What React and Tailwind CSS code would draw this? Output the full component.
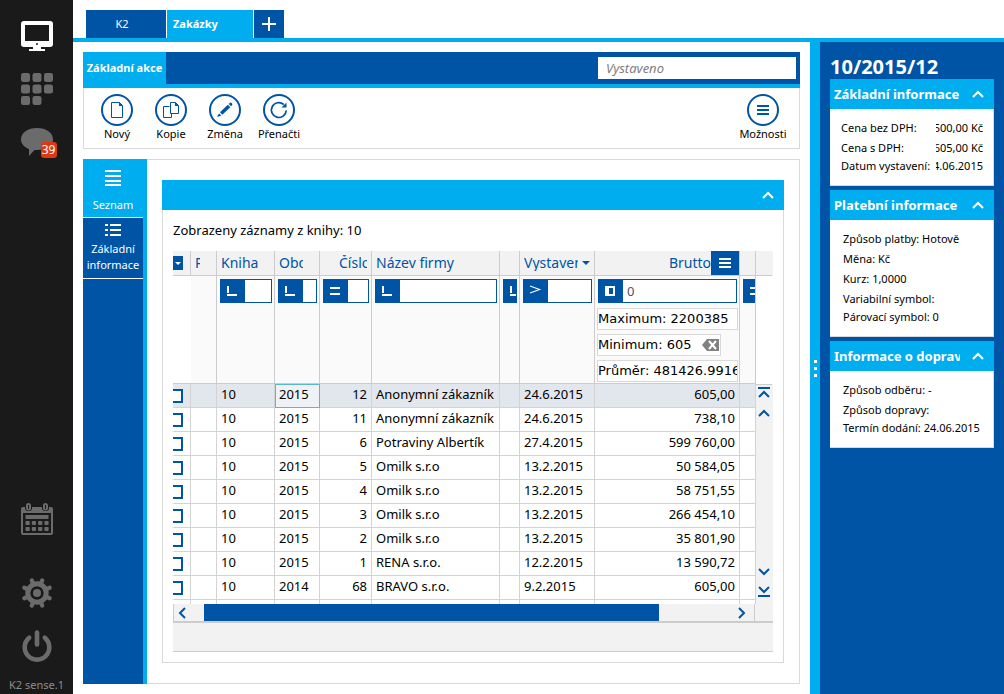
import React, { useState } from 'react';

const records = [
    { id: 1, book: '10', period: '2015', number: '12', company: 'Anonymní zákazník', issued: '24.6.2015', gross: '605,00' },
    { id: 2, book: '10', period: '2015', number: '11', company: 'Anonymní zákazník', issued: '24.6.2015', gross: '738,10' },
    { id: 3, book: '10', period: '2015', number: '6', company: 'Potraviny Albertík', issued: '27.4.2015', gross: '599 760,00' },
    { id: 4, book: '10', period: '2015', number: '5', company: 'Omilk s.r.o', issued: '13.2.2015', gross: '50 584,05' },
    { id: 5, book: '10', period: '2015', number: '4', company: 'Omilk s.r.o', issued: '13.2.2015', gross: '58 751,55' },
    { id: 6, book: '10', period: '2015', number: '3', company: 'Omilk s.r.o', issued: '13.2.2015', gross: '266 454,10' },
    { id: 7, book: '10', period: '2015', number: '2', company: 'Omilk s.r.o', issued: '13.2.2015', gross: '35 801,90' },
    { id: 8, book: '10', period: '2015', number: '1', company: 'RENA s.r.o.', issued: '12.2.2015', gross: '13 590,72' },
    { id: 9, book: '10', period: '2014', number: '68', company: 'BRAVO s.r.o.', issued: '9.2.2015', gross: '605,00' },
];

/* Icons */
const MonitorIcon = () => (
    <svg width="32" height="30" viewBox="0 0 32 30">
        <path fillRule="evenodd" fill="#fff" d="M3 0h26a3 3 0 0 1 3 3v20a3 3 0 0 1-3 3H3a3 3 0 0 1-3-3V3a3 3 0 0 1 3-3zM4 4v16h24V4z" />
        <path fill="#fff" d="M12 26h8v2h4v2H8v-2h4z" />
        <circle cx="16" cy="23" r="1" fill="#1a1a1a" />
    </svg>
);

const AppsIcon = () => (
    <svg width="32" height="32" viewBox="0 0 32 32" fill="#6b6b6b">
        {[[0, 0], [11.5, 0], [23, 0], [0, 11.5], [11.5, 11.5], [23, 11.5], [0, 23], [11.5, 23]].map(([x, y]) => (
            <rect key={`${x}-${y}`} x={x} y={y} width="9" height="9" rx="2.2" />
        ))}
    </svg>
);

const ChatIcon = () => (
    <svg width="32" height="28" viewBox="0 0 32 28" fill="#6b6b6b">
        <path d="M16 0c9 0 16 4.500 16 11.500S25 22 16 22h-2.500L8 28v-7C3 19 0 15.500 0 11.500 0 4.500 7 0 16 0z" />
    </svg>
);

const CalendarIcon = () => (
    <svg width="32" height="32" viewBox="0 0 32 32" fill="#6b6b6b">
        <path fillRule="evenodd" d="M2 4h28a2 2 0 0 1 2 2v24a2 2 0 0 1-2 2H2a2 2 0 0 1-2-2V6a2 2 0 0 1 2-2zM2 10v20h28V10z" />
        <rect x="4" y="0" width="7" height="8" rx="3" fill="#1a1a1a" />
        <rect x="21" y="0" width="7" height="8" rx="3" fill="#1a1a1a" />
        <path fillRule="evenodd" d="M7.500 0A2.500 2.500 0 0 1 10 2.500V5a2.500 2.500 0 0 1-5 0V2.500A2.500 2.500 0 0 1 7.500 0zM7 2v4h1V2zM24.500 0A2.500 2.500 0 0 1 27 2.500V5a2.500 2.500 0 0 1-5 0V2.500A2.500 2.500 0 0 1 24.500 0zM24 2v4h1V2z" />
        <rect x="4.500" y="12" width="23" height="4" />
        {[18, 24].map((y) => [4.5, 10.8, 17.1, 23.4].map((x) => (
            <rect key={`${x}-${y}`} x={x} y={y} width="4.200" height="4" rx="0.800" />
        )))}
    </svg>
);

const GearIcon = () => (
    <svg width="32" height="32" viewBox="0 0 32 32">
        <g stroke="#6b6b6b" strokeWidth="4.200" strokeLinecap="round">
            {[22.5, 67.5, 112.5, 157.5, 202.5, 247.5, 292.5, 337.5].map((angle) => (
                <path key={angle} d="M16 7V2.300" transform={`rotate(${angle} 16 16)`} />
            ))}
        </g>
        <circle cx="16" cy="16" r="9.200" fill="none" stroke="#6b6b6b" strokeWidth="5" />
        <circle cx="16" cy="16" r="4" fill="#6b6b6b" />
    </svg>
);

const PowerIcon = () => (
    <svg width="32" height="32" viewBox="0 0 32 32" fill="none" stroke="#6b6b6b" strokeWidth="4.600" strokeLinecap="round">
        <path d="M16 2.500v12" />
        <path d="M8.200 7.800a12.300 12.300 0 1 0 15.600 0" />
    </svg>
);

const PageIcon = () => (
    <svg width="32" height="32" viewBox="0 0 32 32" fill="none" stroke="#0054a6">
        <path d="M10.500 8.500h8l3 3v12h-11z" />
        <path fill="#0054a6" stroke="none" d="M18 8l4 4h-4z" />
    </svg>
);

const CopyIcon = () => (
    <svg width="32" height="32" viewBox="0 0 32 32" fill="none" stroke="#0054a6">
        <path d="M14.500 12.500h-6v11h8v-4" />
        <path d="M15.500 8.500h5l3 3v8h-8z" />
        <path fill="#0054a6" stroke="none" d="M20 8l4 4h-4z" />
    </svg>
);

const PencilIcon = () => (
    <svg width="32" height="32" viewBox="0 0 32 32" fill="#0054a6">
        <path d="M11 18.200 18.800 10.700 21.300 13.200 13.300 20.800z" />
        <path d="M19.700 9.900l1.300-1.200c1-.7 2.900 1 2.200 2.200l-1.100 1.400z" />
        <path d="M10.200 19.400l2.200 2.200-3.400 1.100c-.6 0-.7-.3-.6-.8z" />
    </svg>
);

const RefreshIcon = () => (
    <svg width="32" height="32" viewBox="0 0 32 32" fill="none" stroke="#0054a6" strokeWidth="1.700">
        <path d="M23.200 16.500a7.400 7.400 0 1 1-2.500-6" />
        <path fill="#0054a6" stroke="none" d="M23.500 8.500v5h-5z" />
    </svg>
);

const OptionsIcon = () => (
    <svg width="32" height="32" viewBox="0 0 32 32" fill="#0054a6">
        <path d="M10 11h12v2H10zM10 15h12v2H10zM10 19h12v2H10z" />
    </svg>
);

const ChevronIcon = ({ className = '' }) => (
    <svg className={className} width="12" height="8" viewBox="0 0 12 8" fill="none" stroke="currentColor" strokeWidth="2">
        <path d="M1 7l5-5 5 5" />
    </svg>
);

const operators = {
    starts: <path d="M7 6v7M6 15h10" />,
    equals: <path d="M6 8h10M6 14h10" />,
    greater: <path strokeWidth="1.200" d="M6 6l9.500 3.500L6 13" />,
    range: <path fill="#fff" stroke="none" fillRule="evenodd" d="M6 6h10v10H6zM10 8v6h4V8z" />,
};

const actions = [
    { name: 'Nový', icon: PageIcon },
    { name: 'Kopie', icon: CopyIcon },
    { name: 'Změna', icon: PencilIcon },
    { name: 'Přenačti', icon: RefreshIcon },
];

const ActionButton = ({ name, icon: Icon }) => (
    <button className="w-[54px] flex flex-col items-center">
        <span className="w-8 h-8 flex items-center justify-center rounded-full border-2 border-[#0054a6]">
            <span className="shrink-0"><Icon /></span>
        </span>
        <span className="text-[11px] leading-4 whitespace-nowrap">{name}</span>
    </button>
);

const FilterBox = ({ label, operator, defaultValue, className = '' }) => (
    <div className={`flex h-6 ml-[3px] mr-0.5 mt-[3px] bg-white border border-[#0054a6] overflow-hidden ${className}`}>
        <button aria-label={`${label} – operátor`} className="w-6 h-full shrink-0 bg-[#0054a6]">
            <svg width="24" height="22" viewBox="0 0 24 22" fill="none" stroke="#fff" strokeWidth="2">
                {operators[operator]}
            </svg>
        </button>
        <input
            aria-label={label}
            defaultValue={defaultValue}
            className="w-0 min-w-0 flex-1 px-1 text-[13px] text-gray-600 outline-none"
        />
    </div>
);

const Summary = ({ children, className = '' }) => (
    <div className={`h-[22px] flex items-center bg-white border border-[#d9d9d9] font-['DejaVu_Sans','Noto_Sans',sans-serif] text-[13px] whitespace-nowrap overflow-hidden ${className}`}>
        {children}
    </div>
);

const InfoCard = ({ title, children }) => (
    <section className="mb-1">
        <h2>
            <button className="w-full h-[30px] pl-1 pr-[10px] flex items-center justify-between bg-[#00adef] text-white">
                <span className="w-[126px] pt-0.5 text-left text-[13px] font-bold whitespace-nowrap overflow-hidden">{title}</span>
                <ChevronIcon />
            </button>
        </h2>
        <div className="pt-[9px] pb-[11px] bg-white border-r border-b border-[#d9d9d9] text-[11px]">{children}</div>
    </section>
);

const InfoLine = ({ children, last }) => (
    <p className={`pl-[13px] whitespace-nowrap ${last ? 'leading-4' : 'leading-5'}`}>{children}</p>
);

const PriceLine = ({ label, value, last }) => (
    <p className={`pl-[11px] pr-[10px] flex justify-between whitespace-nowrap ${last ? 'leading-4' : 'leading-5'}`}>
        <span>{label}</span>
        <span className="w-[47px] flex justify-end overflow-hidden">{value}</span>
    </p>
);

const Sidebar = () => (
    <aside className="w-[73px] shrink-0 flex flex-col items-center bg-[#1a1a1a]">
        <button aria-label="Plocha" className="mt-[21px]"><MonitorIcon /></button>
        <button aria-label="Aplikace" className="mt-[22px]"><AppsIcon /></button>
        <button aria-label="Zprávy" className="relative mt-[23px]">
            <ChatIcon />
            <span className="absolute left-5 top-3.5 w-4 h-4 rounded-[3px] bg-[#dc3912] text-white text-[12px] leading-4">39</span>
        </button>
        <button aria-label="Kalendář" className="mt-auto"><CalendarIcon /></button>
        <button aria-label="Nastavení" className="mt-[42px]"><GearIcon /></button>
        <button aria-label="Odhlásit" className="mt-[21px]"><PowerIcon /></button>
        <span className="mt-[15px] mb-px text-[11px] leading-4 text-[#8c8c8c]">K2 sense.1</span>
    </aside>
);

const HeaderCell = ({ children, className = '' }) => (
    <th className={`h-[25px] pl-1 bg-[#f2f2f2] border-r border-b border-[#ccc] text-left font-normal text-[14px] leading-4 text-[#0054a6] whitespace-nowrap overflow-hidden ${className}`}>
        {children}
    </th>
);

const FilterCell = ({ children }) => (
    <td className="h-[108px] align-top bg-[#fafafa] border-r border-b border-[#ccc] overflow-hidden">{children}</td>
);

const cell = 'h-6 px-1 pb-1 border-r border-b border-[#d3d3d3] whitespace-nowrap overflow-hidden';

const RecordsTable = () => {
    const [selectedId, setSelectedId] = useState(1);

    return (
        <table className="w-full table-fixed border-separate border-spacing-0 text-[13px] leading-4">
            <colgroup>
                <col className="w-[18px]" />
                <col className="w-[26px]" />
                <col className="w-[58px]" />
                <col className="w-[45px]" />
                <col className="w-[52px]" />
                <col className="w-[128px]" />
                <col className="w-5" />
                <col className="w-[75px]" />
                <col className="w-[145px]" />
                <col />
            </colgroup>
            <thead>
                <tr>
                    <th className="h-[25px] bg-[#f2f2f2] border-r border-b border-[#ccc]">
                        <button aria-label="Výběr" className="w-2.5 h-3.5 flex items-center justify-center bg-[#0054a6]">
                            <svg width="6" height="3" viewBox="0 0 6 3" fill="#fff"><path d="M0 0h6L3 3z" /></svg>
                        </button>
                    </th>
                    <HeaderCell><span className="block w-[5px] overflow-hidden">P</span></HeaderCell>
                    <HeaderCell>Kniha</HeaderCell>
                    <HeaderCell><span className="block w-6 overflow-hidden">Období</span></HeaderCell>
                    <HeaderCell><span className="block w-7 ml-auto mr-1 overflow-hidden">Číslo</span></HeaderCell>
                    <HeaderCell>Název firmy</HeaderCell>
                    <HeaderCell />
                    <HeaderCell>
                        <div className="flex items-center gap-1">
                            <span className="w-[54px] overflow-hidden">Vystaveno</span>
                            <svg width="8" height="4" viewBox="0 0 8 4" fill="#0054a6"><path d="M0 0h8L4 4z" /></svg>
                        </div>
                    </HeaderCell>
                    <HeaderCell>
                        <div className="flex items-center justify-end">
                            Brutto
                            <button aria-label="Nabídka sloupce" className="w-7 h-6 flex items-center justify-center bg-[#0054a6]">
                                <svg width="12" height="10" viewBox="0 0 12 10" fill="#fff"><path d="M0 0h12v2H0zM0 4h12v2H0zM0 8h12v2H0z" /></svg>
                            </button>
                        </div>
                    </HeaderCell>
                    <HeaderCell />
                </tr>
                <tr>
                    <td className="border-b border-[#ccc]" />
                    <td className="bg-[#fafafa] border-r border-b border-[#ccc]" />
                    <FilterCell><FilterBox label="Kniha" operator="starts" /></FilterCell>
                    <FilterCell><FilterBox label="Období" operator="starts" /></FilterCell>
                    <FilterCell><FilterBox label="Číslo" operator="equals" /></FilterCell>
                    <FilterCell><FilterBox label="Název firmy" operator="starts" /></FilterCell>
                    <FilterCell><FilterBox label="Zkratka" operator="starts" /></FilterCell>
                    <FilterCell><FilterBox label="Vystaveno" operator="greater" /></FilterCell>
                    <FilterCell>
                        <FilterBox label="Brutto" operator="range" defaultValue="0" />
                        <div className="mt-[5px] ml-0.5 mr-px flex flex-col items-start gap-1">
                            <Summary className="w-full">Maximum: 2200385</Summary>
                            <Summary className="pr-px">
                                Minimum: 605
                                <button aria-label="Zrušit minimum" className="ml-[10px]">
                                    <svg width="17" height="12" viewBox="0 0 17 12">
                                        <path fill="#808080" d="M5 0h12v12H5L0 6z" />
                                        <path stroke="#fff" strokeWidth="2" d="M7 2l7 8M14 2l-7 8" />
                                    </svg>
                                </button>
                            </Summary>
                            <Summary className="w-full">Průměr: 481426.9916</Summary>
                        </div>
                    </FilterCell>
                    <FilterCell><FilterBox label="Netto" operator="equals" className="w-12" /></FilterCell>
                </tr>
            </thead>
            <tbody>
                {records.map((record) => {
                    const selected = record.id === selectedId;
                    return (
                        <tr key={record.id} onClick={() => setSelectedId(record.id)} className={selected ? 'bg-[#e2e6ed]' : 'bg-white'}>
                            <td className="h-6 border-r border-b border-[#d3d3d3] overflow-hidden">
                                <input
                                    type="checkbox"
                                    aria-label={`Označit záznam ${record.number}`}
                                    className="block w-3.5 h-3.5 -ml-1 appearance-none bg-white border-2 border-[#0054a6]"
                                />
                            </td>
                            <td className={cell} />
                            <td className={cell}>{record.book}</td>
                            <td className={`${cell} ${selected ? 'bg-[#eef1f5] outline outline-[#5bb8c8] -outline-offset-1' : ''}`}>{record.period}</td>
                            <td className={`${cell} text-right`}>{record.number}</td>
                            <td className={cell}>{record.company}</td>
                            <td className={cell} />
                            <td className={cell}>{record.issued}</td>
                            <td className={`${cell} text-right`}>{record.gross}</td>
                            <td className={cell} />
                        </tr>
                    );
                })}
                <tr>
                    {Array.from({ length: 10 }, (_, i) => (
                        <td key={i} className="h-1 border-r border-[#d3d3d3]" />
                    ))}
                </tr>
            </tbody>
        </table>
    );
};

const RecordsPanel = () => (
    <section>
        <button aria-label="Sbalit" className="w-full h-[30px] pr-[10px] flex items-center justify-end bg-[#00adef] text-white">
            <ChevronIcon />
        </button>
        <div className="px-[10px] pb-[10px] border border-t-0 border-[#d9d9d9]">
            <p className="h-[41px] flex items-center text-[13px]">Zobrazeny záznamy z knihy: 10</p>
            <div className="flex">
                <div className="flex-1 min-w-0"><RecordsTable /></div>
                <div className="w-[17px] pr-px shrink-0 flex flex-col bg-[#f2f2f2] text-[#0054a6]">
                    <div className="h-[25px] border-b border-[#ccc]" />
                    <div className="h-[108px] -mr-px bg-white" />
                    <div className="flex-1 flex flex-col items-center border-t border-[#ccc]">
                        <button aria-label="Na začátek" className="mt-0.5">
                            <svg width="12" height="11" viewBox="0 0 12 11" fill="none" stroke="currentColor" strokeWidth="2"><path d="M0 1h12M1 10l5-5 5 5" /></svg>
                        </button>
                        <button aria-label="Nahoru" className="mt-[11px]"><ChevronIcon /></button>
                        <button aria-label="Dolů" className="mt-auto"><ChevronIcon className="rotate-180" /></button>
                        <button aria-label="Na konec" className="mt-2.5 mb-[7px]">
                            <svg width="12" height="11" viewBox="0 0 12 11" fill="none" stroke="currentColor" strokeWidth="2"><path d="M0 10h12M1 1l5 5 5-5" /></svg>
                        </button>
                    </div>
                </div>
            </div>
            <div className="h-[17px] flex bg-[#f2f2f2] border-l border-[#ccc] text-[#0054a6]">
                <button aria-label="Doleva" className="w-[30px] pl-1">
                    <svg width="8" height="12" viewBox="0 0 8 12" fill="none" stroke="currentColor" strokeWidth="2"><path d="M7 1L2 6l5 5" /></svg>
                </button>
                <div className="flex-1"><div className="w-6/7 h-full bg-[#0054a6]" /></div>
                <button aria-label="Doprava" className="w-5 pl-[3px] border-r border-[#ccc]">
                    <svg width="8" height="12" viewBox="0 0 8 12" fill="none" stroke="currentColor" strokeWidth="2"><path d="M1 1l5 5-5 5" /></svg>
                </button>
                <div className="w-[18px]" />
            </div>
            <div className="h-[31px] bg-[#f2f2f2] border-t-2 border-b border-[#ccc]" />
        </div>
    </section>
);

const App = () => {
    return (
        <div className="min-h-screen flex bg-white text-black font-['Noto_Sans','Open_Sans',sans-serif]">
            <Sidebar />
            <div className="flex-1 min-w-0 flex flex-col">
                <nav className="pt-[10px] pl-[13px] flex border-b-4 border-[#00adef] text-[11px] text-white">
                    <button className="w-20 h-7 pr-2 bg-[#0054a6]">K2</button>
                    <button className="w-[86px] h-7 ml-px pl-1.5 text-left font-bold bg-[#00adef]">Zakázky</button>
                    <button aria-label="Nová záložka" className="w-[30px] h-7 ml-px flex items-center justify-center bg-[#0054a6]">
                        <svg width="14" height="14" viewBox="0 0 14 14" fill="#fff"><path d="M6 0h2v6h6v2H8v6H6V8H0V6h6z" /></svg>
                    </button>
                </nav>

                <div className="flex-1 flex">
                    <main className="flex-1 min-w-0 p-[10px] flex flex-col gap-[10px]">
                        {/* Toolbar */}
                        <section>
                            <div className="h-9 flex items-center bg-[#0054a6] border-b-4 border-[#00adef]">
                                <h1 className="w-[83px] h-8 pt-2 text-center text-[11px] leading-4 font-bold text-white bg-[#00adef] whitespace-nowrap">Základní akce</h1>
                                <input
                                    aria-label="Hledat"
                                    placeholder="Vystaveno"
                                    className="w-[198px] h-[22px] ml-auto mr-1 px-2 bg-white text-[13px] italic placeholder:text-[#808080] outline-none"
                                />
                            </div>
                            <div className="h-[61px] pt-1.5 pl-1.5 pr-[9px] flex items-start border border-t-0 border-[#d9d9d9]">
                                {actions.map((action) => (
                                    <ActionButton key={action.name} {...action} />
                                ))}
                                <div className="ml-auto"><ActionButton name="Možnosti" icon={OptionsIcon} /></div>
                            </div>
                        </section>

                        {/* Pages + records */}
                        <div className="flex-1 flex">
                            <div className="w-16 shrink-0 flex flex-col bg-[#0054a6] border-r-4 border-[#00adef] text-white text-[11px] leading-4">
                                <button className="h-[59px] flex flex-col items-center bg-[#00adef] border-b border-white">
                                    <svg className="mt-[11px]" width="16" height="16" viewBox="0 0 16 16" fill="#fff"><path d="M0 0h16v2H0zM0 5h16v2H0zM0 10h16v2H0zM0 14h16v2H0z" /></svg>
                                    <span className="mt-[11px]">Seznam</span>
                                </button>
                                <button className="h-[61px] flex flex-col items-center border-b border-white">
                                    <svg className="mt-1.5" width="16" height="12" viewBox="0 0 16 12" fill="#fff"><path d="M0 0h3v2H0zM5 0h11v2H5zM0 5h3v2H0zM5 5h11v2H5zM0 10h3v2H0zM5 10h11v2H5z" /></svg>
                                    <span className="mt-[5px]">Základní<br />informace</span>
                                </button>
                            </div>
                            <div className="flex-1 min-w-0 p-[15px] pt-5 border border-l-0 border-[#d9d9d9]">
                                <RecordsPanel />
                            </div>
                        </div>
                    </main>

                    <div className="w-[10px] shrink-0 flex flex-col items-center justify-center gap-1 bg-[#00adef]">
                        <span className="w-[3px] h-[3px] bg-white" />
                        <span className="w-[3px] h-[3px] bg-white" />
                        <span className="w-[3px] h-[3px] bg-white" />
                    </div>

                    {/* Record detail */}
                    <aside className="w-[184px] shrink-0 px-[10px] pt-[13px] bg-[#0054a6]">
                        <p className="text-[20px] leading-6 font-bold text-white">10/2015/12</p>
                        <InfoCard title="Základní informace">
                            <PriceLine label="Cena bez DPH:" value="500,00 Kč" />
                            <PriceLine label="Cena s DPH:" value="605,00 Kč" />
                            <PriceLine label="Datum vystavení:" value="24.06.2015" last />
                        </InfoCard>
                        <InfoCard title="Platební informace">
                            <InfoLine>Způsob platby: Hotově</InfoLine>
                            <InfoLine>Měna: Kč</InfoLine>
                            <InfoLine>Kurz: 1,0000</InfoLine>
                            <InfoLine>Variabilní symbol:</InfoLine>
                            <InfoLine last>Párovací symbol: 0</InfoLine>
                        </InfoCard>
                        <InfoCard title="Informace o dopravě">
                            <InfoLine>Způsob odběru: -</InfoLine>
                            <InfoLine>Způsob dopravy:</InfoLine>
                            <InfoLine last>Termín dodání: 24.06.2015</InfoLine>
                        </InfoCard>
                    </aside>
                </div>
            </div>
        </div>
    );
};

export default App;
